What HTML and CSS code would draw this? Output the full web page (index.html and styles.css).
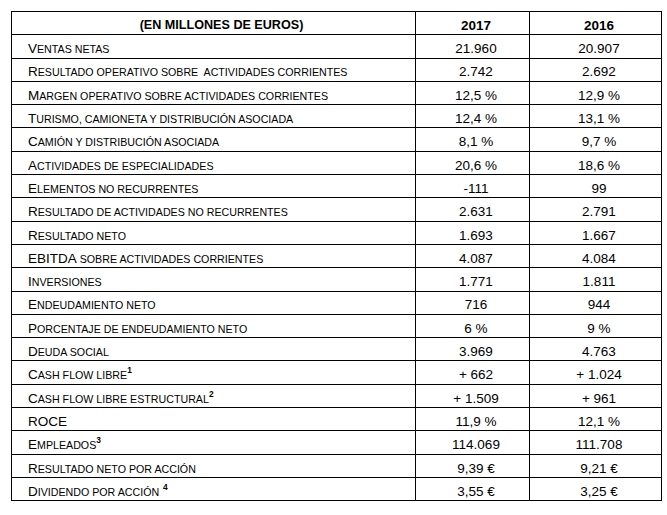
FILE: index.html
```html
<!DOCTYPE html>
<html lang="es">
<head>
<meta charset="utf-8">
<link rel="stylesheet" href="styles.css">
</head>
<body>
<table class="kpi">
  <colgroup>
    <col class="c-label">
    <col class="c-y1">
    <col class="c-y2">
  </colgroup>
  <thead>
    <tr>
      <th class="label-h">(EN MILLONES DE EUROS)</th>
      <th>2017</th>
      <th>2016</th>
    </tr>
  </thead>
  <tbody>
    <tr><td class="label">V<span class="sc">entas netas</span></td><td>21.960</td><td>20.907</td></tr>
    <tr><td class="label">R<span class="sc">esultado operativo sobre&nbsp; actividades corrientes</span></td><td>2.742</td><td>2.692</td></tr>
    <tr><td class="label">M<span class="sc">argen operativo sobre actividades corrientes</span></td><td>12,5 %</td><td>12,9 %</td></tr>
    <tr><td class="label">T<span class="sc">urismo, camioneta y distribución asociada</span></td><td>12,4 %</td><td>13,1 %</td></tr>
    <tr><td class="label">C<span class="sc">amión y distribución asociada</span></td><td>8,1 %</td><td>9,7 %</td></tr>
    <tr><td class="label">A<span class="sc">ctividades de especialidades</span></td><td>20,6 %</td><td>18,6 %</td></tr>
    <tr><td class="label">E<span class="sc">lementos no recurrentes</span></td><td>-111</td><td>99</td></tr>
    <tr><td class="label">R<span class="sc">esultado de actividades no recurrentes</span></td><td>2.631</td><td>2.791</td></tr>
    <tr><td class="label">R<span class="sc">esultado neto</span></td><td>1.693</td><td>1.667</td></tr>
    <tr><td class="label">EBITDA<span class="sc"> sobre actividades corrientes</span></td><td>4.087</td><td>4.084</td></tr>
    <tr><td class="label">I<span class="sc">nversiones</span></td><td>1.771</td><td>1.811</td></tr>
    <tr><td class="label">E<span class="sc">ndeudamiento neto</span></td><td>716</td><td>944</td></tr>
    <tr><td class="label">P<span class="sc">orcentaje de endeudamiento neto</span></td><td>6 %</td><td>9 %</td></tr>
    <tr><td class="label">D<span class="sc">euda social</span></td><td>3.969</td><td>4.763</td></tr>
    <tr><td class="label">C<span class="sc">ash flow libre</span><sup>1</sup></td><td>+ 662</td><td>+ 1.024</td></tr>
    <tr><td class="label">C<span class="sc">ash flow libre estructural</span><sup>2</sup></td><td>+ 1.509</td><td>+ 961</td></tr>
    <tr><td class="label">ROCE</td><td>11,9 %</td><td>12,1 %</td></tr>
    <tr><td class="label">E<span class="sc">mpleados</span><sup>3</sup></td><td>114.069</td><td>111.708</td></tr>
    <tr><td class="label">R<span class="sc">esultado neto por acción</span></td><td>9,39 €</td><td>9,21 €</td></tr>
    <tr><td class="label">D<span class="sc">ividendo por acción</span> <sup>4</sup></td><td>3,55 €</td><td>3,25 €</td></tr>
  </tbody>
</table>
</body>
</html>
```

FILE: styles.css
```css
html, body {
  margin: 0;
  padding: 0;
  background: #ffffff;
}

body {
  font-family: "Liberation Sans", Arial, sans-serif;
  color: #000000;
}

.kpi {
  margin: 11px 0 0 11px;
  width: 650px;
  border-collapse: collapse;
  table-layout: fixed;
  font-size: 13.5px;
}

.c-label { width: 404px; }
.c-y1 { width: 114px; }
.c-y2 { width: 132px; }

.kpi th,
.kpi td {
  border: 1px solid #000000;
  height: 23.3px;
  padding: 5px 0 0 7px;
  text-align: center;
  white-space: nowrap;
  line-height: 1;
  box-sizing: border-box;
}

.kpi th {
  font-weight: bold;
}

.kpi th.label-h {
  padding-left: 16px;
  font-size: 12.6px;
}

.kpi td.label {
  text-align: left;
  padding-left: 16px;
}

.sc {
  font-size: 0.79em;
  text-transform: uppercase;
}

sup {
  font-size: 0.62em;
  font-weight: bold;
  vertical-align: 0.75em;
  line-height: 0;
}
```
